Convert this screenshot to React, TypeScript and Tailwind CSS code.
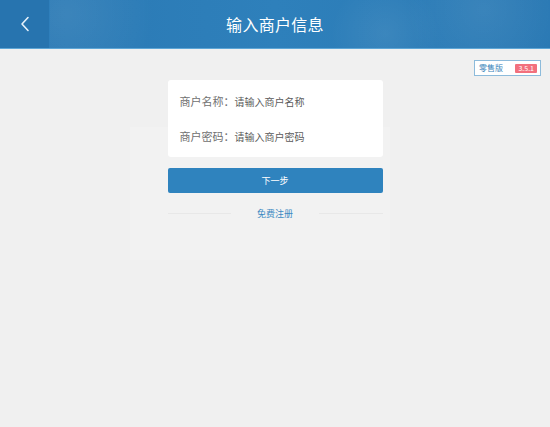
import React from "react";

const FONT = "font-['Noto_Sans_CJK_SC','Noto_Sans',sans-serif]";

function Header() {
  return (
    <header className="relative flex h-[49px] items-stretch border-b border-[#5ea6d6] bg-[#2b7ab4] bg-[radial-gradient(circle_at_12%_30%,rgba(255,255,255,0.08),transparent_18%),radial-gradient(circle_at_70%_70%,rgba(255,255,255,0.07),transparent_14%),radial-gradient(circle_at_88%_20%,rgba(255,255,255,0.07),transparent_16%),linear-gradient(90deg,#2a78b3,#2e80bb_50%,#2a79b4)]">
      <button
        type="button"
        className="flex w-[50px] items-center justify-center border-r border-[#2f7fbb] bg-[#2774af]"
      >
        <svg width="10" height="16" viewBox="0 0 10 16" fill="none">
          <path d="M8 1.5L2 8l6 6.5" stroke="#e6f2fb" strokeWidth="1.6" strokeLinecap="round" strokeLinejoin="round" />
        </svg>
      </button>
      <div className="flex flex-1 items-center justify-center pr-[50px]">
        <h1 className="text-[16px] font-normal tracking-[0.3px] text-white">输入商户信息</h1>
      </div>
    </header>
  );
}

export default function App() {
  return (
    <div className={`${FONT} relative h-[427px] w-[550px] overflow-hidden bg-[#f0f0f0]`}>
      <Header />

      {/* faint backdrop panel behind the form */}
      <div className="absolute left-[130px] top-[127px] h-[133px] w-[260px] bg-[#f2f2f2]" />

      <div className="relative flex justify-end pr-[9px] pt-[11px]">
        <div className="flex h-[16px] w-[67px] items-center justify-between border border-[#8dbbdb] bg-white pl-[4px] pr-[3px]">
          <span className="text-[8px] leading-none text-[#3d86bb]">零售版</span>
          <span className="rounded-[1px] bg-[#f2707d] px-[3px] py-[1px] text-[7px] leading-none text-white">3.5.1</span>
        </div>
      </div>

      <div className="relative mx-auto mt-[4px] w-[215px]">
        <div className="rounded-[3px] bg-white">
          <div className="flex h-[41px] items-center pl-[12px] pt-[2px]">
            <span className="text-[11px] text-[#707070]">商户名称：</span>
            <span className="text-[10px] text-[#5a5a5a]">请输入商户名称</span>
          </div>
          <div className="flex h-[36px] items-center pl-[12px] pb-[6px]">
            <span className="text-[11px] text-[#707070]">商户密码：</span>
            <span className="text-[10px] text-[#5a5a5a]">请输入商户密码</span>
          </div>
        </div>

        <button
          type="button"
          className="mt-[11px] flex h-[25px] w-full items-center justify-center rounded-[2px] bg-[#2f83be] text-[9px] text-white"
        >
          下一步
        </button>

        <div className="mt-[14px] flex items-center gap-[26px]">
          <div className="h-px flex-1 bg-[#e8e8e8]" />
          <span className="text-[9px] text-[#3d8ac2]">免费注册</span>
          <div className="h-px flex-1 bg-[#e8e8e8]" />
        </div>
      </div>
    </div>
  );
}
